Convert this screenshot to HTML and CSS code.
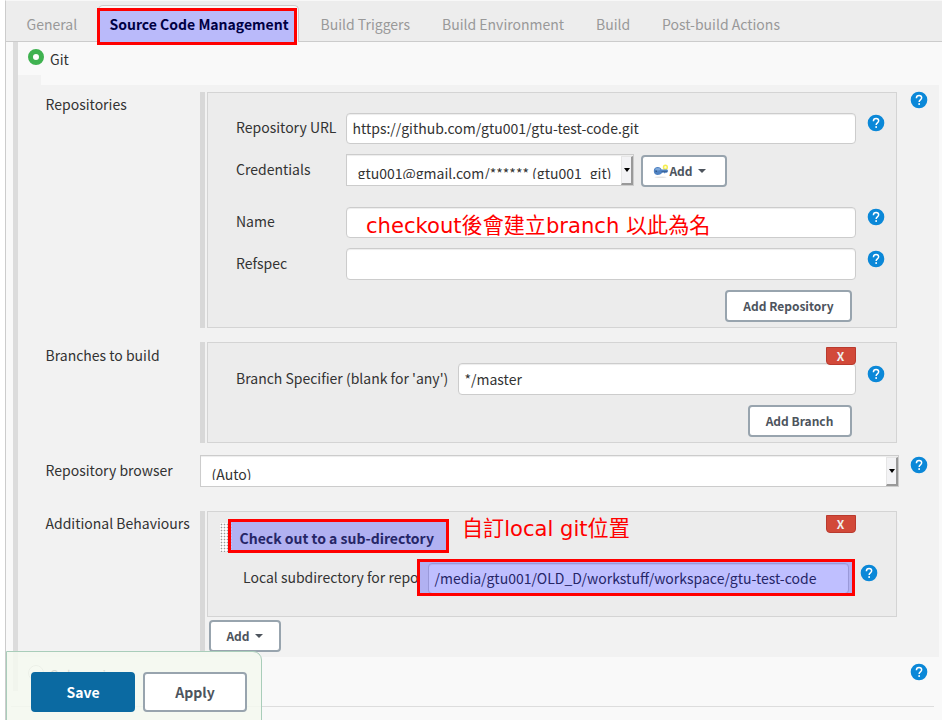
FILE: index.html
```html
<!DOCTYPE html>
<html lang="en">
<head>
<meta charset="utf-8">
<title>Job configuration</title>
<link rel="stylesheet" href="styles.css">
</head>
<body>
<svg class="defs" width="0" height="0" aria-hidden="true">
  <symbol id="help" viewBox="0 0 24 24" overflow="visible">
    <circle cx="12" cy="12" r="12.500" fill="#0b88d8"/>
    <path d="M8.100 9.200C8.100 6.800 9.800 5.300 12.100 5.300c2.300 0 3.900 1.400 3.900 3.500 0 3-3.800 3.200-3.800 6.200" fill="none" stroke="#fff" stroke-width="2.200"/>
    <rect x="11" y="16.800" width="2.500" height="2.500" fill="#fff"/>
  </symbol>
  <symbol id="key" viewBox="0 0 16 16">
    <ellipse cx="7.500" cy="14.300" rx="6" ry=".8" fill="#e3e3e3"/>
    <circle cx="12.400" cy="4.200" r="1.900" fill="#fffbd0" stroke="#f4ee4e" stroke-width="1.400"/>
    <path d="M.8 8c0-2.600 1.600-4 4-4 2 0 3.200.9 3.800 2.600h5.600l1 1.400-1.200 1.700-1.200-.2-1 .9-1.200-.9-1.300.3C7.700 11.200 6.500 12 4.800 12 2.400 12 .8 10.600.8 8z" fill="#4f82c2"/>
    <ellipse cx="4.800" cy="6.200" rx="2.700" ry="1.300" fill="#7fa8da"/>
    <path d="M8.500 8.600h5.600" stroke="#33598c" stroke-width=".8"/>
    <circle cx="3.200" cy="8.200" r=".8" fill="#2c507e"/>
  </symbol>
</svg>
<div class="page">
  <nav class="tabs">
    <span class="tab t-general">General</span>
    <span class="tab active">Source Code Management</span>
    <span class="tab t-triggers">Build Triggers</span>
    <span class="tab t-env">Build Environment</span>
    <span class="tab t-build">Build</span>
    <span class="tab t-post">Post-build Actions</span>
  </nav>
  <main class="config">
    <div class="scm">
      <div class="choice"><span class="radio on"></span><span class="choice-label">Git</span></div>
      <div class="git">
        <section class="row repos">
          <span class="label">Repositories</span>
          <div class="chunk">
            <div class="box">
              <div class="field url"><span class="label">Repository URL</span><div class="input">https://github.com/gtu001/gtu-test-code.git</div><svg class="help"><use href="#help"/></svg></div>
              <div class="field cred"><span class="label">Credentials</span>
                <div class="select"><span class="value">gtu001@gmail.com/****** (gtu001_git)</span><span class="drop"></span></div>
                <button class="btn add-key"><svg class="key"><use href="#key"/></svg>Add<i class="caret"></i></button></div>
              <div class="field name"><span class="label">Name</span><div class="input"></div><svg class="help"><use href="#help"/></svg></div>
              <div class="field ref"><span class="label">Refspec</span><div class="input"></div><svg class="help"><use href="#help"/></svg></div>
              <div class="actions"><button class="btn add-repo">Add Repository</button></div>
            </div>
          </div>
          <svg class="help"><use href="#help"/></svg>
        </section>
        <section class="row branches">
          <span class="label">Branches to build</span>
          <div class="chunk">
            <div class="box">
              <span class="delete">X</span>
              <div class="field spec"><span class="label">Branch Specifier (blank for 'any')</span><div class="input">*/master</div><svg class="help"><use href="#help"/></svg></div>
              <div class="actions"><button class="btn add-branch">Add Branch</button></div>
            </div>
          </div>
        </section>
        <section class="row browser">
          <span class="label">Repository browser</span>
          <div class="select"><span class="value">(Auto)</span><span class="drop"></span></div>
          <svg class="help"><use href="#help"/></svg>
        </section>
        <section class="row extra">
          <span class="label">Additional Behaviours</span>
          <div class="chunk">
            <div class="box">
              <span class="delete">X</span>
              <div class="heading"><span class="handle"></span><b>Check out to a sub-directory</b></div>
              <div class="field local"><span class="label">Local subdirectory for repo</span><div class="input">/media/gtu001/OLD_D/workstuff/workspace/gtu-test-code</div><svg class="help"><use href="#help"/></svg></div>
            </div>
            <button class="btn add-extra">Add<i class="caret"></i></button>
          </div>
        </section>
      </div>
      <div class="choice svn"><span class="radio"></span><span class="choice-label">Subversion</span><svg class="help"><use href="#help"/></svg></div>
    </div>
    <hr>
  </main>
</div>
<footer class="bar"><button class="btn save">Save</button><button class="btn apply">Apply</button></footer>
<div class="mark m-tab"></div>
<div class="mark m-heading"></div>
<div class="mark m-path"></div>
<div class="note n-name">checkout後會建立branch 以此為名</div>
<div class="note n-path">自訂local git位置</div>
</body>
</html>
```
FILE: styles.css
```css
* { box-sizing: border-box; }
body {
  margin: 0;
  width: 942px;
  height: 720px;
  overflow: hidden;
  position: relative;
  background: #fff;
  color: #333;
  font: 14px/20px "Noto Sans CJK TC", "Open Sans", sans-serif;
  white-space: nowrap;
}
.defs { position: absolute; }
.page {
  margin-left: 5px;
  height: 720px;
  border-left: 1px solid #ccc;
  border-top: 1px solid #f8f8f8;
  background: #f9f9f9;
}

/* tabs */
.tabs {
  display: flex;
  height: 41px;
  padding-left: 20.5px;
  background: #ededed;
  border-bottom: 1px solid #ccc;
  color: #999;
}
.tab { padding-top: 13px; }
.t-general { width: 71.5px; }
.tab.active {
  width: 201px;
  height: 37px;
  margin-top: 4px;
  padding: 8px 0 0 10.5px;
  background: #f9f9f9;
  border: 1px solid #ccc;
  border-bottom: 0;
  border-radius: 5px 5px 0 0;
  color: #000;
  font-weight: bold;
}
.t-triggers { margin-left: 21.5px; width: 121.5px; }
.t-env { width: 154px; }
.t-build { width: 66px; }

/* body */
.config { padding-left: 7px; }
.scm { height: 649px; border-left: 5px solid #dcdcdc; }
.choice { display: flex; height: 43px; padding: 7px 0 0 10px; background: linear-gradient(#f2f2f2, #f2f2f2) 0 33px / 23px 10px no-repeat; }
.choice-label { margin: 0 0 0 6px; }
.radio { width: 16px; height: 16px; border-radius: 50%; border: 1px solid #bbb; background: #fff; }
.radio.on { border: 5px solid #3fb250; }
.svn { padding-top: 8px; background: none; }
.svn .choice-label { width: 861px; margin-top: 0; }
.svn .help { margin-top: -1px; }
.git { height: 572px; width: 921px; padding: 7px 0 0 27px; background: #f2f2f2; }
hr { width: 923px; margin: 15px 0 0 -2px; border: 0; border-top: 1px solid #ddd; }
.help { flex: none; width: 16px; height: 16px; overflow: visible; }
.row { display: flex; }
.row > .label { width: 155px; padding: 2px 0 0 .5px; }
.chunk { width: 697px; border-left: 5px solid #d8d8d8; padding-left: 2px; }
.box { position: relative; width: 690px; border: 1px solid #d4d4d4; background: #ececec; }
.row > .help { margin-left: 14px; }
.repos { height: 236px; }
.repos .box { height: 236px; padding-top: 20px; }
.branches { height: 101px; margin-top: 14px; }
.branches > .label { padding-top: 3px; }
.branches .box { height: 101px; padding-top: 20px; }
.browser { height: 32px; margin-top: 12px; }
.browser > .label { padding-top: 5px; }
.extra { height: 141px; margin-top: 24px; }
.extra .box { height: 106px; padding-top: 11px; }
.row > .help { margin-top: 0; }
.browser > .help { margin: 2px 0 0 12px; }

.field { display: flex; padding-left: 28px; }
.field > .label { flex: none; width: 110px; padding-top: 4px; }
.field > .help { margin: 2px 0 0 12px; }
.input {
  width: 510px;
  height: 31px;
  padding: 4px 5.5px;
  background: #fff;
  border: 1px solid #ccc;
  border-radius: 4px;
  box-shadow: inset 0 1px 1px rgba(0, 0, 0, .075);
}
.url { height: 41px; }
.cred { height: 53px; }
.cred > .label { padding-top: 5px; }
.name { height: 41px; }
.ref { height: 42px; }
.ref > .label { padding-top: 5px; }
.field.ref > .help { margin-top: 3px; }
.ref .input, .spec .input { height: 32px; }
.spec { height: 42px; }
.spec > .label { width: 222px; padding-top: 5px; }
.spec .input { width: 398px; padding-top: 5px; }
.spec > .help { margin-top: 3px; }
.select {
  display: flex;
  width: 288px;
  height: 32px;
  border: 1px solid #ccc;
  background: #fff;
  box-shadow: inset 0 1px 1px rgba(0, 0, 0, .075);
}
.value { flex: 1; height: 24px; padding: 8px 0 0 10.5px; overflow: hidden; }
.drop {
  width: 12px;
  margin: 1px 0 0;
  border: 1px solid #e6e6e6;
  border-right: 2px solid #999;
  border-bottom: 2px solid #999;
  background: #f3f3f5;
  display: flex;
  align-items: center;
  justify-content: center;
}
.drop::before { content: ""; border: 3px solid transparent; border-top: 4px solid #000; border-bottom: 0; }
.browser .select { width: 699px; margin-right: -4px; }
.browser > .help { margin-left: 16px; }

.btn {
  display: flex;
  align-items: center;
  justify-content: center;
  height: 32px;
  padding: 0;
  border: 2px solid #98a4ae;
  border-radius: 4px;
  background: #fff;
  color: #4d545d;
  font: bold 12px/20px "Noto Sans CJK TC", "Open Sans", sans-serif;
}
.caret { margin-left: 5px; border: 4px solid transparent; border-top-color: #4d545d; border-bottom: 0; }
.add-key { width: 86px; margin: 1px 0 0 7px; padding-right: 9px; }
.key { width: 16px; height: 16px; }
.actions { display: flex; justify-content: flex-end; padding-right: 44px; }
.add-repo { width: 127px; }
.add-branch { width: 104px; padding-right: 1px; }
.add-extra { width: 72px; margin: 3px 0 0 2px; padding-right: 1px; }
.delete {
  position: absolute;
  right: 40px;
  top: 4px;
  width: 30px;
  height: 18px;
  border: 1px solid #b93a2e;
  border-radius: 0 0 4px 4px;
  background: #d24939;
  color: #eee;
  font: bold 12px/16px "Noto Sans CJK TC", sans-serif;
  padding-right: 1px;
  text-align: center;
}
.extra .delete { top: 3px; }
.heading { display: flex; height: 40px; padding-left: 12px; }
.handle { width: 12px; height: 29px; background: radial-gradient(circle, #999 .7px, #fff 1.1px) 0 0 / 3px 3px; }
.heading b { margin: 5px 0 0 7.5px; }
.local { padding-left: 35px; }
.local > .label { width: 185px; }
.local .input { width: 421px; }
.local > .help { margin-left: 12px; }

.bar {
  position: absolute;
  left: 6px;
  top: 651px;
  width: 256px;
  height: 70px;
  display: flex;
  gap: 8px;
  padding: 20px 0 0 24px;
  border: 1px solid #a9cdba;
  border-radius: 0 9px 0 0;
  background: rgba(245, 249, 240, .85);
}
.bar .btn { width: 104px; height: 40px; font-size: 14px; }
.bar .save { background: #0b6aa2; border-color: #0b6aa2; color: #fff; }

/* annotations */
.mark { position: absolute; border: 3px solid #f00; background: rgba(0, 0, 255, .25); }
.m-tab { left: 97px; top: 8px; width: 200px; height: 37px; }
.m-heading { left: 228px; top: 519px; width: 221px; height: 34px; }
.m-path { left: 417px; top: 559px; width: 438px; height: 37px; }
.note { position: absolute; color: #f00; font: 21.1px/26px "DejaVu Sans", "Noto Sans CJK TC", sans-serif; }
.n-name { left: 366px; top: 213px; }
.n-path { left: 462px; top: 516px; }
```
